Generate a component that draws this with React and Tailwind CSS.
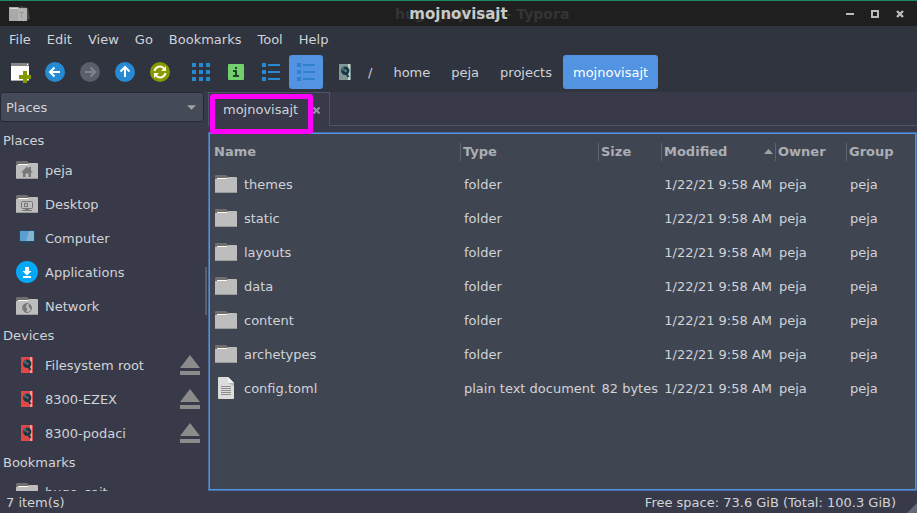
import React from "react";

const menus = ["File", "Edit", "View", "Go", "Bookmarks", "Tool", "Help"];
const places = [
  ["peja", "home"],
  ["Desktop", "desktop"],
  ["Computer", "computer"],
  ["Applications", "apps"],
  ["Network", "network"],
];
const devices = ["Filesystem root", "8300-EZEX", "8300-podaci"];
const files = [
  ["themes", "folder", ""],
  ["static", "folder", ""],
  ["layouts", "folder", ""],
  ["data", "folder", ""],
  ["content", "folder", ""],
  ["archetypes", "folder", ""],
  ["config.toml", "plain text document", "82 bytes"],
];

function Folder({ children }) {
  return (
    <svg width="22" height="22" viewBox="0 0 22 22" className="shrink-0">
      <path d="M0 3Q0 2 1 2H11L13 4V8H0Z" fill="#6f6f6f" />
      <path d="M0 6H12V5L13 4H21Q22 4 22 5V20H0Z" fill="#bdbdbd" />
      <path d="M2 5H12V6H2Z" fill="#fffbe8" />
      <path d="M0 19H22V20H0Z" fill="#9c9c9c" />
      {children}
    </svg>
  );
}

function TextFile() {
  return (
    <svg width="22" height="22" viewBox="0 0 22 22" className="shrink-0">
      <path d="M3 1Q3 0 4 0H13L19 6V21Q19 22 18 22H4Q3 22 3 21Z" fill="#dcdcdc" />
      <path d="M13 0L19 6V9L13 6Z" fill="#b4b4b4" />
      <path d="M13 0L19 6H14Q13 6 13 5Z" fill="#f0f0f0" />
      <path d="M6 9.500H16M6 11.500H16M6 13.500H16M6 15.500H16M6 17.500H16" stroke="#8d8d8d" />
    </svg>
  );
}

function Disk({ body, side }) {
  return (
    <svg width="12" height="16" viewBox="0 0 12 16" className="shrink-0">
      <rect width="12" height="16" rx="0.500" fill={body} />
      <rect x="9" width="2" height="16" fill={side} />
      <circle cx="6.200" cy="6.800" r="4.200" fill="#173a47" />
      <path d="M6 7L2.200 6A4 4 0 0 1 5 3Z" fill="#3d6f7c" />
      <circle cx="6.600" cy="6.800" r="1.100" fill={body} />
      <path d="M7 9L9.500 13" stroke="#173a47" strokeWidth="2" />
    </svg>
  );
}

function PlaceIcon({ kind }) {
  if (kind === "computer")
    return (
      <svg width="22" height="22" viewBox="0 0 22 22">
        <rect x="3" y="3" width="16" height="12" rx="1" fill="#24495c" />
        <path d="M4 4H18V14H4Z" fill="#5a9fd1" />
        <path d="M13 4H18V14H10Z" fill="#83b4d2" />
        <path d="M9 15H13V16H15V17H7V16H9Z" fill="#274352" />
      </svg>
    );
  if (kind === "apps")
    return (
      <svg width="22" height="22" viewBox="0 0 22 22">
        <circle cx="11" cy="11" r="11" fill="#05a8f4" />
        <path d="M9 6H13V10H15.500L11 14.500L6.500 10H9ZM7 15H15V17H7Z" fill="#fff" />
      </svg>
    );
  return (
    <Folder>
      {kind === "home" && (
        <path d="M5 13.500L11 7.500L13 9.500V8H15V11.500L17 13.500H15V18H12.500V14.500H9.500V18H7V13.500Z" fill="#777" />
      )}
      {kind === "desktop" && (
        <g fill="none" stroke="#777">
          <rect x="5.500" y="8.500" width="11" height="7" rx="1" />
          <rect x="8.500" y="10.500" width="3" height="3" />
          <path d="M9 16.500H13M6 17.500H16" />
        </g>
      )}
      {kind === "network" && (
        <g>
          <circle cx="11" cy="13" r="4.500" fill="none" stroke="#777" />
          <path d="M7 10L10 8.500L11 10L9.500 12L11.500 14L10 17.500L8 16L7 13ZM13 9L15 11V14L13.500 13L12.500 11Z" fill="#777" />
        </g>
      )}
    </Folder>
  );
}

function Round({ fill, children }) {
  return (
    <svg width="20" height="20" viewBox="0 0 20 20">
      <circle cx="10" cy="10" r="10" fill={fill} />
      {children}
    </svg>
  );
}

function GridIcon() {
  return (
    <svg width="18" height="18" viewBox="0 0 18 18" fill="#268bd2">
      <path d="M0 0H4V4H0ZM7 0H11V4H7ZM14 0H18V4H14ZM0 7H4V11H0ZM7 7H11V11H7ZM14 7H18V11H14ZM0 14H4V18H0ZM7 14H11V18H7ZM14 14H18V18H14Z" />
    </svg>
  );
}

function ListIcon({ fill }) {
  return (
    <svg width="18" height="18" viewBox="0 0 18 18" fill={fill}>
      <path d="M0 0H4V4H0ZM6 1H18V3H6ZM0 7H4V11H0ZM6 8H18V10H6ZM0 14H4V18H0ZM6 15H18V17H6Z" />
    </svg>
  );
}

function ToolButton({ label, active, disabled, children }) {
  return (
    <button
      aria-label={label}
      disabled={disabled}
      className={
        "flex h-[34px] shrink-0 items-center justify-center rounded-[3px] " +
        (active ? "w-[34px] bg-[#5294e2]" : "w-[35px] pr-px")
      }
    >
      {children}
    </button>
  );
}

function TitleBar() {
  return (
    <header className="relative flex h-[26px] items-center border-t border-[#1c8b62] bg-[#1f1f1f] pr-[9px] pl-2">
      <svg width="22" height="18" viewBox="0 0 22 18">
        <path d="M12 1L20 3L22 14L15 17Z" fill="#474947" />
        <path d="M1 2H10L12 3H19V16H1Z" fill="#a9aaa8" />
        <path d="M2 3H10V4H2Z" fill="#dadad2" />
        <path d="M10 4L19 4V15L10 16Z" fill="#b4b5b3" />
        <path d="M11 7.500H16M13.500 7V13" stroke="#999a98" />
      </svg>
      <span aria-hidden="true" className="absolute inset-y-0 left-[395px] flex items-center text-[14px] font-bold whitespace-pre text-[#343434]">
        hugo_sajt.md - Typora
      </span>
      <h1 className="absolute inset-0 flex items-center justify-center text-[15px] font-bold text-[#c6c9c9]">
        mojnovisajt
      </h1>
      <div className="relative ml-auto flex gap-[9px]">
        <button aria-label="Minimize" className="flex size-4 items-center justify-center">
          <svg width="8" height="8" viewBox="0 0 8 8"><path d="M0 3H8V5H0Z" fill="#babdbd" /></svg>
        </button>
        <button aria-label="Maximize" className="flex size-4 items-center justify-center">
          <svg width="8" height="8" viewBox="0 0 8 8"><rect x="1" y="1" width="6" height="6" fill="none" stroke="#babdbd" strokeWidth="2" /></svg>
        </button>
        <button aria-label="Close" className="flex size-4 items-center justify-center">
          <svg width="8" height="8" viewBox="0 0 8 8"><path d="M1 1L7 7M7 1L1 7" stroke="#babdbd" strokeWidth="2.400" /></svg>
        </button>
      </div>
    </header>
  );
}

function Toolbar() {
  return (
    <div className="flex h-10 items-center pl-[3px]">
      <ToolButton label="New window">
        <svg width="22" height="22" viewBox="0 0 22 22">
          <rect x="2" y="2" width="18" height="18" fill="#fdfdfd" />
          <path d="M2 2H20V5H2Z" fill="#858585" />
          <path d="M18 3H19V4H18Z" fill="#fff" />
          <path d="M2 19H20V20H2Z" fill="#aaa" />
          <path d="M14 10H18V14H22V18H18V22H14V18H10V14H14Z" fill="#859900" />
        </svg>
      </ToolButton>
      <ToolButton label="Back">
        <Round fill="#268bd2"><path d="M15 10H5M9.500 5.500L5 10L9.500 14.500" stroke="#fff" strokeWidth="2" fill="none" /></Round>
      </ToolButton>
      <ToolButton label="Forward" disabled>
        <Round fill="#5a5f6b"><path d="M5 10H15M10.500 5.500L15 10L10.500 14.500" stroke="#80848d" strokeWidth="2" fill="none" /></Round>
      </ToolButton>
      <ToolButton label="Up">
        <Round fill="#268bd2"><path d="M10 15V5M5.500 9.500L10 5L14.500 9.500" stroke="#fff" strokeWidth="2" fill="none" /></Round>
      </ToolButton>
      <ToolButton label="Reload">
        <Round fill="#859900">
          <path d="M4.500 9A5.500 5.500 0 0 1 14 6.500M15.500 11A5.500 5.500 0 0 1 6 13.500" stroke="#fdf9e6" strokeWidth="2" fill="none" />
          <path d="M16 4V9H11ZM4 16V11H9Z" fill="#fdf9e6" />
        </Round>
      </ToolButton>
      <div className="ml-[6px] flex">
        <ToolButton label="Icon view"><GridIcon /></ToolButton>
        <ToolButton label="Thumbnail view">
          <svg width="16" height="16" viewBox="0 0 16 16">
            <rect width="16" height="16" rx="1" fill="#71d16c" />
            <path d="M7 3H9V5H7ZM5 6H9V11H11V13H5V11H7V8H5Z" fill="#25402c" />
          </svg>
        </ToolButton>
        <ToolButton label="Compact view"><ListIcon fill="#268bd2" /></ToolButton>
        <ToolButton label="Detailed list view" active><ListIcon fill="#2f80cf" /></ToolButton>
      </div>
      <nav aria-label="Path" className="ml-[6px] flex items-center gap-px">
        <button aria-label="Drive" className="flex h-[34px] w-8 items-center justify-center">
          <Disk body="#809796" side="#c8cfc4" />
        </button>
        <button className="h-[34px] px-[6px] pt-px">/</button>
        <button className="ml-1 h-[34px] px-[10px] pt-px">home</button>
        <button className="h-[34px] px-[10px] pt-px">peja</button>
        <button className="h-[34px] px-[10px] pt-px">projects</button>
        <button className="h-[34px] rounded-[3px] bg-[#5294e2] px-[10px] pt-px text-white">mojnovisajt</button>
      </nav>
    </div>
  );
}

function SideHeading({ children }) {
  return <h2 className="h-[25px] px-[3px] leading-[25px]">{children}</h2>;
}

function Sidebar() {
  return (
    <aside className="flex w-[208px] shrink-0 flex-col overflow-hidden">
      <div className="relative mr-1">
        <select aria-label="Side pane" className="block h-[30px] w-full appearance-none rounded-[3px] border border-[#262934] bg-[#444a58] px-[5px] pt-[2px] text-[13px]">
          <option>Places</option>
        </select>
        <svg width="9" height="5" viewBox="0 0 10 5" className="pointer-events-none absolute top-[13px] right-2">
          <path d="M0 0H10L5 5Z" fill="#a2a2a2" />
        </svg>
      </div>
      <div className="relative min-h-0 flex-1 overflow-hidden pt-[6px]">
        <SideHeading>Places</SideHeading>
        <ul>
          {places.map(([name, kind]) => (
            <li key={name} className="flex h-[34px] items-center gap-[7px] pl-4">
              <PlaceIcon kind={kind} />
              <span className="pt-px">{name}</span>
            </li>
          ))}
        </ul>
        <SideHeading>Devices</SideHeading>
        <ul>
          {devices.map((name) => (
            <li key={name} className="flex h-[34px] items-center pr-2 pl-4">
              <span className="mr-[7px] flex w-[22px] justify-center"><Disk body="#e04848" side="#f0a09c" /></span>
              <span className="pt-px">{name}</span>
              <button aria-label={"Eject " + name} className="ml-auto">
                <svg width="20" height="20" viewBox="0 0 20 20" fill="#8b8b8b"><path d="M10 0L20 13H0ZM0 16H20V20H0Z" /></svg>
              </button>
            </li>
          ))}
        </ul>
        <SideHeading>Bookmarks</SideHeading>
        <ul>
          <li className="flex h-[34px] items-center gap-[7px] pl-4">
            <Folder />
            <span className="pt-px">hugo_sajt</span>
          </li>
        </ul>
        <div className="absolute top-[145px] right-px h-12 w-[2px] bg-[#5b5f6b]" />
      </div>
    </aside>
  );
}

function FileTable() {
  const cell = "p-0 pt-px";
  const headCell = "p-0 pt-[2px]";
  const head = "border-l border-[#5e636d] pl-[2px] leading-[18px] text-left";
  return (
    <table className="w-full table-fixed border-collapse whitespace-nowrap">
      <colgroup>
        <col />
        <col className="w-[138px]" />
        <col className="w-[63px]" />
        <col className="w-[114px]" />
        <col className="w-[71px]" />
        <col className="w-[69px]" />
      </colgroup>
      <thead className="text-[#acaeb4]">
        <tr className="h-[33px]">
          <th className={headCell}><div className="pl-1 text-left leading-[18px]">Name</div></th>
          <th className={headCell}><div className={head}>Type</div></th>
          <th className={headCell}><div className={head}>Size</div></th>
          <th className={headCell} aria-sort="descending">
            <div className={head + " flex items-center justify-between pr-[2px]"}>
              Modified
              <svg width="9" height="5" viewBox="0 0 9 5"><path d="M0 5L4.500 0L9 5Z" fill="#a2a2a2" /></svg>
            </div>
          </th>
          <th className={headCell}><div className={head}>Owner</div></th>
          <th className={headCell}><div className={head}>Group</div></th>
        </tr>
      </thead>
      <tbody>
        {files.map(([name, type, size]) => (
          <tr key={name} className="h-[34px]">
            <td className="p-0 pl-[5px]">
              <div className="flex items-center gap-[7px]">
                {type === "folder" ? <Folder /> : <TextFile />}
                <span className="pt-px">{name}</span>
              </div>
            </td>
            <td className={cell + " pl-1"}>{type}</td>
            <td className={cell + " pr-[3px] text-right"}>{size}</td>
            <td className={cell + " pr-[3px] text-right"}>1/22/21 9:58 AM</td>
            <td className={cell + " pl-1"}>peja</td>
            <td className={cell + " pl-1"}>peja</td>
          </tr>
        ))}
      </tbody>
    </table>
  );
}

export default function App() {
  return (
    <div className="flex h-screen flex-col overflow-hidden bg-[#383a49] font-['DejaVu_Sans',sans-serif] text-[13px] leading-5 text-[#d0d3d8]">
      <TitleBar />
      <div className="bg-[#2f343f]">
        <nav aria-label="Menu" className="flex h-[26px] items-center gap-4 px-[9px] pt-[2px]">
          {menus.map((m) => (
            <button key={m}>{m}</button>
          ))}
        </nav>
        <Toolbar />
      </div>
      <div className="flex min-h-0 flex-1">
        <Sidebar />
        <main className="flex min-w-0 flex-1 flex-col">
          <div className="relative mb-[6px] flex h-[34px]">
            <div className="flex items-start gap-[15px] border-t border-r border-l border-[#4f5468] pt-[9px] pr-[9px] pl-[14px] leading-4">
              <span>mojnovisajt</span>
              <button aria-label="Close tab" className="flex h-4 items-center">
                <svg width="7" height="7" viewBox="0 0 7 7"><path d="M0.500 0.500L6.500 6.500M6.500 0.500L0.500 6.500" stroke="#94979f" strokeWidth="2" /></svg>
              </button>
            </div>
            <div className="flex-1 border-b border-[#4f5468]" />
            <div className="pointer-events-none absolute top-[2px] left-[2px] h-10 w-[103px] rounded-[3px] border-[5px] border-[#ff00fa]" />
          </div>
          <section aria-label="Files" className="min-h-0 flex-1 border border-[#456ea5] bg-[#404552]">
            <div className="h-full border border-[#5294e2]">
              <FileTable />
            </div>
          </section>
        </main>
      </div>
      <footer className="relative flex h-[22px] items-center justify-between pt-px pr-[21px] pl-[6px]">
        <span>7 item(s)</span>
        <span>Free space: 73.6 GiB (Total: 100.3 GiB)</span>
        <svg width="10" height="10" viewBox="0 0 10 10" className="absolute right-0 bottom-0"><path d="M10 0V10H0Z" fill="#656877" /></svg>
      </footer>
    </div>
  );
}
